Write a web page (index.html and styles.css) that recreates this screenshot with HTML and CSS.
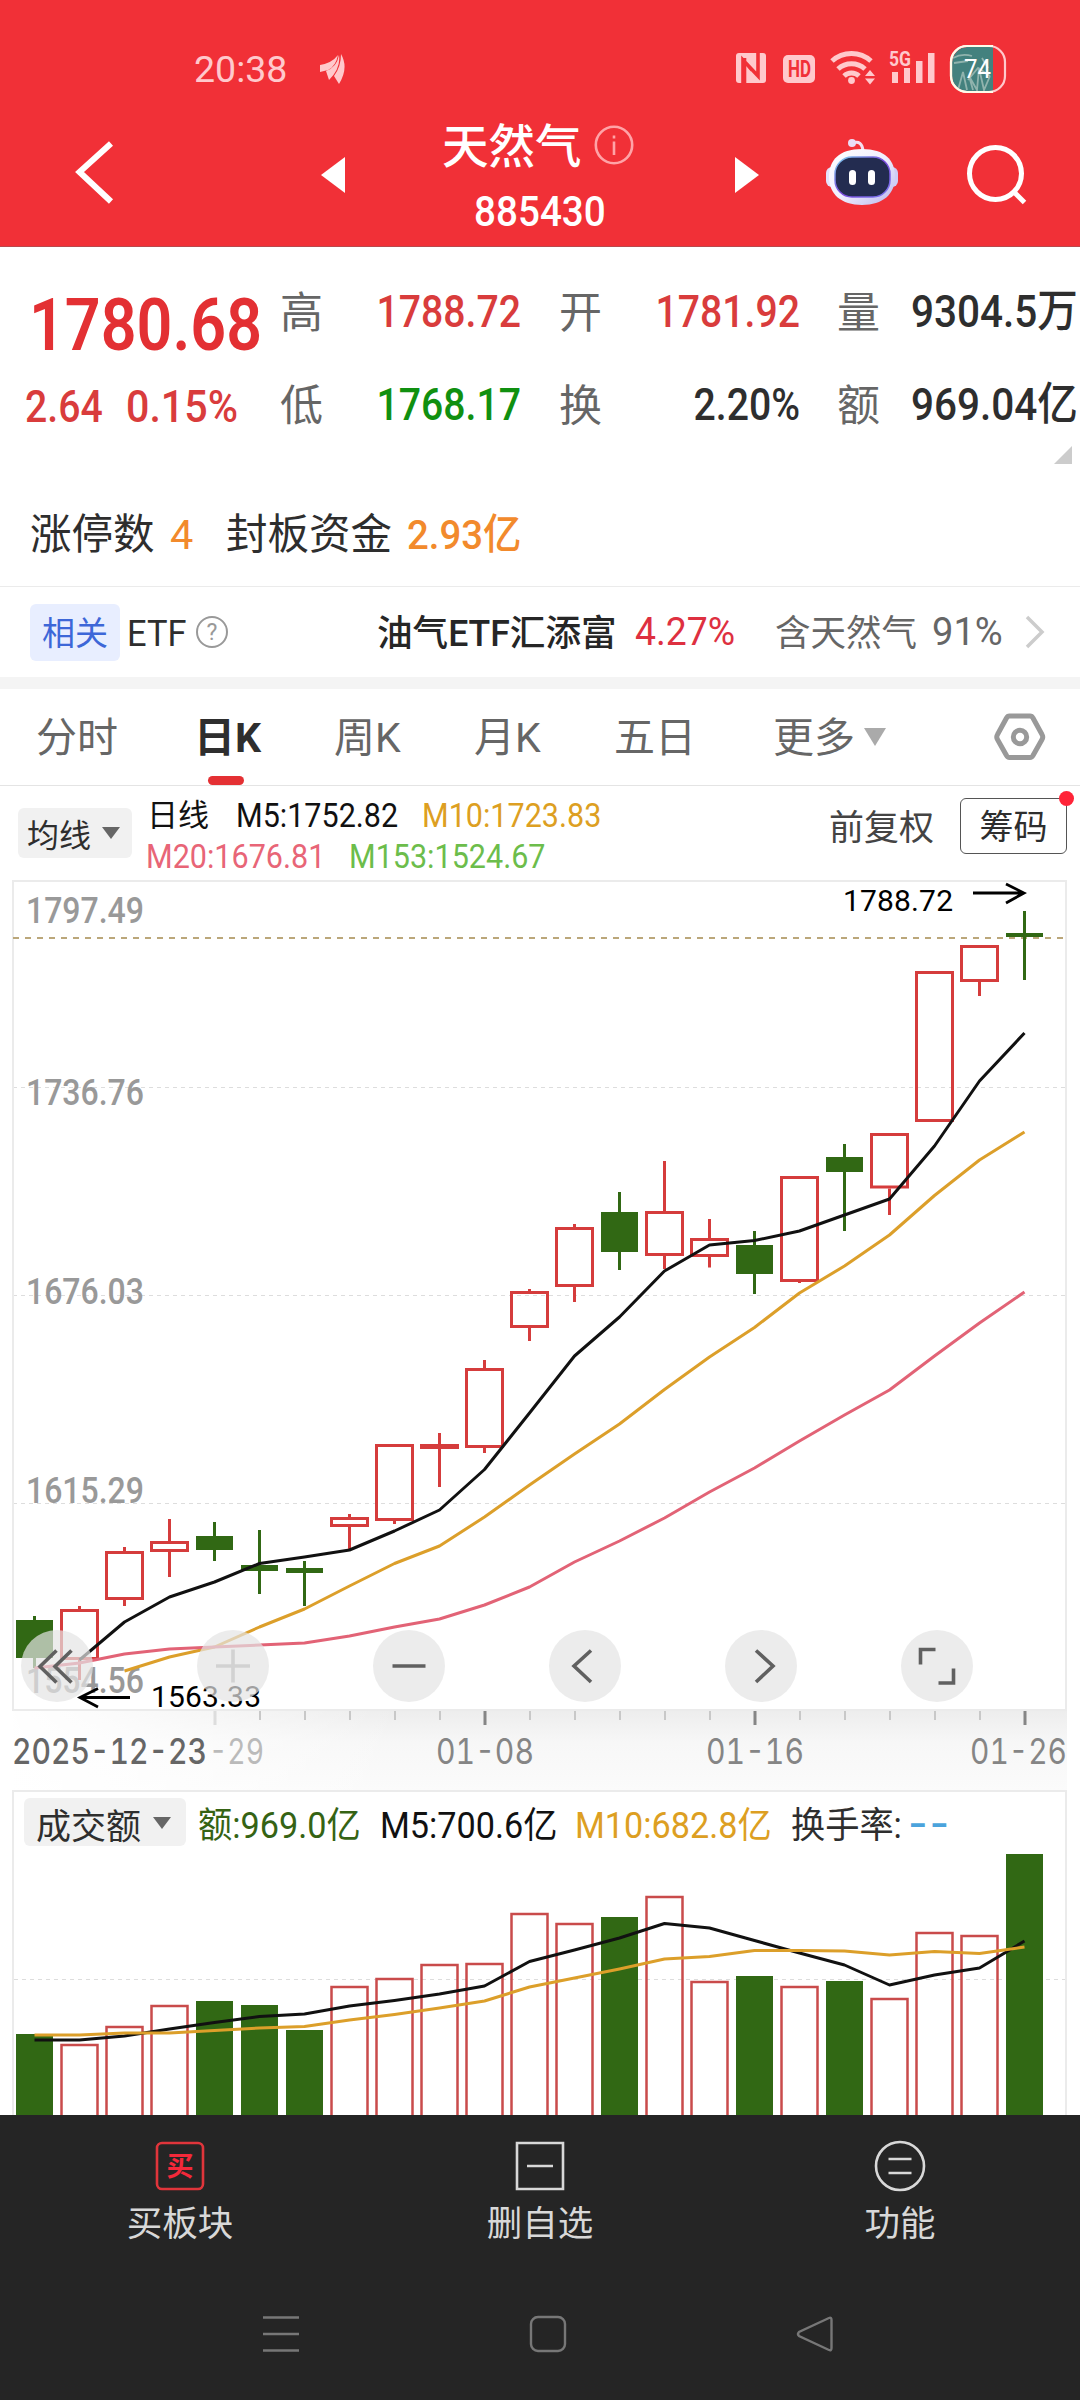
FILE: index.html
```html
<!DOCTYPE html>
<html lang="zh-CN">
<head>
<meta charset="utf-8">
<title>天然气 885430</title>
<link rel="stylesheet" href="styles.css">
</head>
<body>
<header class="top">
  <div class="status">
    <span class="clock">20:38</span>
    <svg class="app-mark" width="28" height="30" viewBox="320 54 28 30"><path d="M321 65Q333 63 339 55Q337 66 329 70L321 72ZM340 55Q342 68 330 80L327 71Q338 67 340 55ZM342 54Q350 68 340 84L335 76Q342 67 342 54Z"/></svg>
    <svg class="signals" width="280" height="50" viewBox="730 44 280 50">
      <rect x="736" y="53" width="30" height="30" rx="3"/>
      <path class="cut" d="M743 83V60l15 16V53M748.500 66L752 70M744.500 58V83" fill="none"/>
      <rect x="783" y="55" width="32" height="28" rx="5"/>
      <text class="hd" x="788" y="77" textLength="23" lengthAdjust="spacingAndGlyphs">HD</text>
      <path class="arc" d="M832 61a29 29 0 0 1 39 0M838 69a20 20 0 0 1 27 0M844 76a11 11 0 0 1 15 0"/>
      <circle cx="851.500" cy="80.500" r="3.400"/>
      <path d="M865 76l5-6 5 6zM865 78.500l5 6 5-6z"/>
      <text class="g5" x="889" y="66" textLength="22" lengthAdjust="spacingAndGlyphs">5G</text>
      <path d="M892 72h6v11h-6zM904 68h6v15h-6zM916 61h6.500v22h-6.500zM928 53h6.500v30h-6.500z"/>
      <path class="batt-fill" d="M993 47H967a16 16 0 0 0-15 15v15a16 16 0 0 0 15 15h26z"/>
      <path class="batt-art" d="M953 58q9-5 19-2M954 63l14-2M958 90l5-18 4 18M973 90l-4-14 8 14 2-22 5 22 6-14M968 80l10-12 12 8M982 58l6 10"/>
      <rect class="batt-rim" x="951" y="46" width="54" height="46" rx="16"/>
      <path class="batt-rim bright" d="M993 46H967a16 16 0 0 0-16 16v14a16 16 0 0 0 16 16h26"/>
      <text class="pct" x="964" y="78" textLength="27" lengthAdjust="spacingAndGlyphs">74</text>
    </svg>
  </div>
  <div class="nav">
    <svg class="back" width="44" height="70" viewBox="72 137 44 70"><path d="M111 143.500L79.500 172 111 201.500"/></svg>
    <svg class="prev" width="24" height="36" viewBox="0 0 24 36"><path d="M24 0v36L0 18z"/></svg>
    <div class="title">
      <div class="name">天然气<svg width="42" height="42" viewBox="0 0 42 42"><circle cx="21" cy="21" r="18.200"/><path d="M21 17.500V31M21 11.500v3"/></svg></div>
      <div class="code">885430</div>
    </div>
    <svg class="next" width="24" height="36" viewBox="0 0 24 36"><path d="M0 0v36L24 18z"/></svg>
    <svg class="robot" width="76" height="70" viewBox="823 137 76 70">
      <defs><linearGradient id="shell" x1="0" y1="0" x2="1" y2="1"><stop offset="0" stop-color="#fff"/><stop offset=".5" stop-color="#f1effd"/><stop offset="1" stop-color="#b9b6ee"/></linearGradient>
      <linearGradient id="visor" x1="0" y1="0" x2="1" y2="1"><stop offset="0" stop-color="#7fd3ee"/><stop offset=".5" stop-color="#7a48dc"/><stop offset="1" stop-color="#7b7af0"/></linearGradient></defs>
      <path d="M852 143q9-3 10 8" fill="none" stroke="#f5dff0" stroke-width="3"/><circle cx="851" cy="143" r="4" fill="#eadcf5"/>
      <rect x="825" y="167" width="12" height="20" rx="6" fill="#e4e2fb"/><rect x="885" y="167" width="12" height="20" rx="6" fill="#cfcdf6"/>
      <path d="M861 149c23 0 33 11 33 28s-12 28-33 28-33-11-33-28 10-28 33-28z" fill="url(#shell)"/>
      <rect x="834" y="157" width="55" height="40" rx="17" fill="#232c50" stroke="url(#visor)" stroke-width="1.500"/>
      <rect x="848" y="170" width="7" height="15" rx="3.500" fill="#fff"/><rect x="867" y="170" width="7" height="15" rx="3.500" fill="#fff"/>
    </svg>
    <svg class="search" width="64" height="64" viewBox="964 144 64 64"><circle cx="994.500" cy="173.500" r="26"/><path d="M1013.500 192.500l10 10"/></svg>
  </div>
</header>

<section class="quote">
  <div class="price">1780.68</div>
  <div class="change"><span>2.64</span><span class="pctchg">0.15%</span></div>
  <dl class="stats">
    <dt>高</dt><dd class="up">1788.72</dd><dt>开</dt><dd class="up">1781.92</dd><dt>量</dt><dd>9304.5万</dd>
    <dt>低</dt><dd class="down">1768.17</dd><dt>换</dt><dd>2.20%</dd><dt>额</dt><dd>969.04亿</dd>
  </dl>
  <svg class="corner" width="18" height="18"><path d="M18 0v18H0z"/></svg>
  <div class="limits"><span>涨停数</span><b>4</b><span>封板资金</span><b class="amt">2.93亿</b></div>
</section>

<section class="etf">
  <span class="tag">相关</span><span class="latin">ETF</span>
  <svg width="34" height="34" viewBox="0 0 34 34"><circle cx="17" cy="17" r="15"/><text x="17" y="25" text-anchor="middle">?</text></svg>
  <span class="fund">油气ETF汇添富</span><span class="gain">4.27%</span><span class="hold">含天然气</span><span class="share">91%</span>
  <svg class="more" width="20" height="34" viewBox="0 0 20 34"><path d="M2 2l15 15L2 32"/></svg>
</section>

<nav class="tabs">
  <span>分时</span><span class="on">日K</span><span>周K</span><span>月K</span><span>五日</span><span>更多</span>
  <svg class="tri" width="22" height="18"><path d="M0 0h22L11 18z"/></svg>
  <svg class="gear" width="52" height="50" viewBox="994 712 52 50"><path d="M1009.500 716h20.500q2 0 3 2l9 16.500q1.500 2.500 0 5l-9 16q-1 2-3 2h-20.500q-2 0-3-2l-9-16q-1.500-2.500 0-5l9-16.500q1-2 3-2z"/><circle cx="1020" cy="737" r="6.700"/></svg>
</nav>

<section class="legend">
  <span class="drop">均线<svg width="18" height="12"><path d="M0 0h18L9 12z"/></svg></span>
  <div class="ma">
    <div class="line1"><span class="cjk">日线</span><span>M5:1752.82</span><span class="m10">M10:1723.83</span></div>
    <div class="line2"><span class="m20">M20:1676.81</span><span class="m153">M153:1524.67</span></div>
  </div>
  <span class="adj">前复权</span>
  <span class="chips">筹码<i></i></span>
</section>

<svg class="kchart" width="1080" height="910" viewBox="0 880 1080 910">
  <defs>
    <linearGradient id="shade" x1="0" y1="0" x2="0" y2="1"><stop offset="0" stop-color="#ededed"/><stop offset=".4" stop-color="#f7f7f7"/><stop offset="1" stop-color="#fbfbfb"/></linearGradient>
    <linearGradient id="veil" x1="0" y1="0" x2="1" y2="0"><stop offset="0" stop-color="#fff"/><stop offset=".25" stop-color="#fff" stop-opacity=".8"/><stop offset="1" stop-color="#fff" stop-opacity="0"/></linearGradient>
  </defs>
  <rect x="13" y="1711" width="1054" height="79" fill="url(#shade)"/>
  <rect x="0" y="1711" width="400" height="79" fill="url(#veil)"/>
  <path class="grid" d="M13 1087.500H1066M13 1295.500H1066M13 1503.500H1066"/>
  <rect class="frame" x="13" y="881" width="1053" height="829"/>
  <g class="scale">
    <text x="26" y="923" textLength="118" lengthAdjust="spacingAndGlyphs">1797.49</text>
    <text x="26" y="1105" textLength="118" lengthAdjust="spacingAndGlyphs">1736.76</text>
    <text x="26" y="1304" textLength="118" lengthAdjust="spacingAndGlyphs">1676.03</text>
    <text x="26" y="1503" textLength="118" lengthAdjust="spacingAndGlyphs">1615.29</text>
    <text x="26" y="1693" textLength="118" lengthAdjust="spacingAndGlyphs">1554.56</text>
  </g>
  <path class="last" d="M13 938H1066"/>
  <g id="candles"></g>
  <g class="extreme">
    <text x="843" y="911" textLength="110">1788.72</text><text x="151" y="1707" textLength="110">1563.33</text>
    <path d="M973 893h51M1006 884l18 9-18 10M130 1697.500H80M98 1688.500l-18 9 18 9.500"/>
  </g>
  <g class="dates">
    <text class="first" x="12" y="1764" textLength="195" lengthAdjust="spacingAndGlyphs">2025-12-23</text>
    <text class="ghost" x="209" y="1764" textLength="55" lengthAdjust="spacingAndGlyphs">-29</text>
    <text x="436" y="1764" textLength="98" lengthAdjust="spacingAndGlyphs">01-08</text>
    <text x="706" y="1764" textLength="98" lengthAdjust="spacingAndGlyphs">01-16</text>
    <text x="970" y="1764" textLength="97" lengthAdjust="spacingAndGlyphs">01-26</text>
  </g>
  <g class="tools">
    <circle cx="57" cy="1666" r="36"/><circle cx="233" cy="1666" r="36"/><circle cx="409" cy="1666" r="36"/><circle cx="585" cy="1666" r="36"/><circle cx="761" cy="1666" r="36"/><circle cx="937" cy="1666" r="36"/>
    <path d="M56.500 1650.500L40 1666.500l16.500 16M71.500 1650.500L55 1666.500l16.500 16M392.500 1666h33M591 1650.500l-17 15.500 17 16M756 1650.500l17 15.500-17 16M920.500 1664.500v-15h15M953.500 1668.500v14.500h-15"/>
    <path class="off" d="M216 1666h34M233 1649.500v33"/>
  </g>
</svg>

<section class="volume">
  <div class="vlegend">
    <span class="drop">成交额<svg width="18" height="12"><path d="M0 0h18L9 12z"/></svg></span>
    <span class="amount">额:969.0亿</span><span>M5:700.6亿</span><span class="m10">M10:682.8亿</span><span class="rate">换手率:</span><span class="dash">--</span>
  </div>
  <svg class="vchart" width="1051" height="265" viewBox="14 1850 1051 265"><path class="grid" d="M14 1979.500H1065"/><g id="bars"></g></svg>
</section>

<footer class="bottom">
  <div class="actions">
    <div><svg width="52" height="52" viewBox="0 0 52 52"><rect class="buy" x="3" y="3" width="46" height="46" rx="5"/><text class="buy-t" x="26" y="36" text-anchor="middle">买</text></svg><span>买板块</span></div>
    <div><svg width="52" height="52" viewBox="0 0 52 52"><path d="M3 3h46v46H3zM13 26h26"/></svg><span>删自选</span></div>
    <div><svg width="52" height="52" viewBox="0 0 52 52"><circle cx="26" cy="26" r="24"/><path d="M14.500 19h23M14.500 33h23"/></svg><span>功能</span></div>
  </div>
  <div class="system">
    <svg width="40" height="40" viewBox="261 2314 40 40"><path d="M263 2317.500h36M263 2334h36M263 2350.500h36"/></svg>
    <svg width="40" height="40" viewBox="0 0 40 40"><rect x="3" y="3" width="34" height="34" rx="7"/></svg>
    <svg width="40" height="40" viewBox="795 2314 40 40"><path d="M829 2318L799 2332q-2 2 0 4l30 14q2.500 1 2.500-2v-28q0-3-2.500-2z"/></svg>
  </div>
</footer>
<script src="chart.js"></script>
</body>
</html>
```
FILE: styles.css
```css
* { box-sizing: border-box; }
body {
  margin: 0; width: 1080px; height: 2400px; overflow: hidden; background: #fff; color: #2e2e2e;
  font-family: Roboto, "Noto Sans CJK SC", sans-serif; white-space: nowrap;
}
svg { display: block; flex: none; }

.top { height: 247px; background: #f13037; border-bottom: 1px solid #b9484c; }
.status { height: 94px; padding-top: 44px; display: flex; align-items: center; }
.clock { width: 125px; margin-left: 194px; font-size: 37.500px; line-height: 48px; color: #ffc9cc; }
.app-mark { fill: #ffc9cc; }
.signals { margin-left: 383px; fill: #ffc9cc; }
.signals .cut { stroke: #f13037; stroke-width: 3.600; }
.signals .hd { fill: #f13037; font-size: 23px; font-weight: 700; }
.signals .g5 { font-size: 21px; font-weight: 700; }
.signals .arc { fill: none; stroke: #ffc9cc; stroke-width: 5; }
.batt-fill { fill: #43817e; }
.batt-art { fill: none; stroke: #a9c4be; stroke-width: 1.800; opacity: .75; }
.batt-rim { fill: none; stroke: #ffc9cc; stroke-width: 2.200; }
.batt-rim.bright { stroke: #fffbe9; }
.pct { fill: #fff; font-size: 25px; }

.nav { display: flex; height: 152px; align-items: flex-start; }
.nav svg { fill: none; stroke: #fff; }
.nav .back { margin: 43px 0 0 72px; stroke-width: 6; }
.nav .prev { margin: 63px 0 0 205px; fill: #fff; stroke: none; }
.title { width: 293px; margin-left: 45px; padding: 26px 0 0 52px; color: #fff; font-weight: 500; }
.name { display: flex; align-items: center; font-size: 46.500px; line-height: 54px; }
.name svg { margin: -5px 0 0 11px; stroke: #ffa3a7; stroke-width: 2.600; }
.code { font-size: 42px; line-height: 50px; padding-left: 32px; margin-top: 13px; transform: scaleX(.92); transform-origin: 32px 0; }
.nav .next { margin: 63px 0 0 52px; fill: #fff; stroke: none; }
.nav .robot { margin: 43px 0 0 65px; stroke: none; }
.nav .search { margin: 50px 0 0 65px; stroke-width: 5; }

.quote {
  height: 340px; border-bottom: 1px solid #ebebeb; display: grid;
  grid-template: 118px 93px 129px / 281px 799px; position: relative;
}
.price { padding: 38px 0 0 29px; font-size: 73px; line-height: 80px; font-weight: 600; color: #e33033; transform: scaleX(.86); transform-origin: 29px 0; }
.change { grid-row: 2; display: grid; grid-template-columns: 101px 130px; padding: 13px 0 0 25px; font-size: 45px; line-height: 58px; font-weight: 500; color: #d93c3c; }
.change span, .stats dd, .ma span { transform: scaleX(.87); transform-origin: 0 0; }
.change .pctchg { transform: scaleX(.915); }
.stats { grid-row: 1 / 3; grid-column: 2; margin: 0; display: grid; grid-template-columns: 46px 194px 85px 194px 71px 209px; grid-template-rows: 93px 93px; padding-top: 36px; line-height: 58px; }
.stats dt { font-size: 43px; color: #666; padding-top: 1px; margin-left: -1px; }
.stats dt:nth-of-type(3n+2) { margin-left: 38px; }
.stats dt:nth-of-type(3n) { margin-left: 37px; }
.stats dd { margin: 0; font-size: 45px; font-weight: 500; text-align: right; transform-origin: 100% 0; }
.stats dd:nth-of-type(3n) { text-align: left; transform: scaleX(.9); transform-origin: 0 0; margin-left: 40px; }
.stats .up { color: #d93c3c; }
.stats .down { color: #109010; }
.corner { position: absolute; left: 1054px; top: 199px; fill: #ccc; }
.limits { grid-row: 3; grid-column: 1 / 3; display: grid; grid-template-columns: 140px 56px 181px 200px; padding: 48px 0 0 30px; font-size: 41.500px; line-height: 58px; }
.limits b { font-weight: 400; color: #f28a2c; }
.limits .amt { font-weight: 500; transform: scaleX(.925); transform-origin: 0 0; }

.etf { height: 102px; border-bottom: 12px solid #f4f4f4; display: grid; grid-template-columns: 97px 68px 182px 258px 140px 157px 93px 30px; align-items: center; padding-left: 30px; font-size: 36px; line-height: 50px; }
.tag { width: 90px; height: 57px; line-height: 59px; border-radius: 6px; background: #e8eeff; color: #3d67d8; font-size: 33px; text-align: center; }
.latin { transform: scaleX(.93); transform-origin: 0 0; font-size: 37px; padding-top: 3px; }
.etf circle { fill: none; stroke: #999; stroke-width: 2; }
.etf text { font-size: 23px; fill: #999; }
.fund { font-weight: 500; padding-top: 4px; color: #262626; transform: scaleX(.988); transform-origin: 0 0; }
.gain { color: #de3040; font-size: 38.500px; transform: scaleX(.97); transform-origin: 0 0; }
.hold { color: #666; padding-top: 4px; transform: scaleX(.985); transform-origin: 0 0; }
.share { color: #666; font-size: 38.500px; transform: scaleX(.99); transform-origin: 0 0; }
.more { fill: none; stroke: #ccc; stroke-width: 3.500; }

.tabs { height: 97px; border-bottom: 1px solid #e4e4e4; display: grid; grid-template-columns: 161px 137px 140px 140px 159px 91px 130px 60px; padding: 0 0 0 36px; align-items: center; font-size: 41px; line-height: 99px; color: #666; }
.tabs span { height: 96px; }
.tabs .on { color: #2e2e2e; font-weight: 700; position: relative; left: -3px; }
.tabs .on::after { content: ""; position: absolute; left: 14px; bottom: 0; width: 36px; height: 9px; border-radius: 5px; background: #e43033; }
.tri { fill: #aaa; }
.gear { fill: none; stroke: #999; stroke-width: 5; }

.legend { height: 94px; display: grid; grid-template-columns: 129px 682px 131px 110px; padding-left: 18px; }
.drop { display: flex; align-items: center; justify-content: space-between; border-radius: 6px; background: #f1f1f1; }
.drop svg { fill: #666; }
.legend .drop { width: 114px; height: 50px; margin-top: 22px; padding: 0 12px 0 9px; font-size: 32px; }
.ma { padding-top: 9px; font-size: 33px; line-height: 41px; }
.ma > div { display: grid; }
.ma span { transform: scaleX(.925); }
.ma .cjk { font-size: 31px; padding-left: 0; transform: none; }
.line1 { grid-template-columns: 89px 186px 200px; color: #111; }
.line2 { grid-template-columns: 203px 220px; margin-left: -1px; }
.m10 { color: #dd9f22; }
.m20 { color: #e86577; }
.m153 { color: #6cbd4b; }
.adj { font-size: 35px; line-height: 50px; padding-top: 18px; color: #444; }
.chips { position: relative; width: 107px; height: 56px; margin-top: 12px; border: 1.500px solid #555; border-radius: 6px; text-align: center; font-size: 34px; line-height: 56px; }
.chips i { position: absolute; right: -8px; top: -8px; width: 15px; height: 15px; border-radius: 50%; background: #ff2438; }

.grid { fill: none; stroke: #ddd; stroke-width: 1; stroke-dasharray: 4 4; }
.frame { fill: none; stroke: #ebebeb; stroke-width: 2; }
.last { fill: none; stroke: #bba77a; stroke-width: 1.800; stroke-dasharray: 6 6; }
.scale text { font-size: 36.500px; fill: #999; font-weight: 500; }
.extreme text { font-size: 30px; fill: #000; }
.extreme path { fill: none; stroke: #000; stroke-width: 2.800; }
.dates text { font-family: Inter, sans-serif; font-feature-settings: "tnum"; font-size: 35px; fill: #858585; }
.dates .first { fill: #666; font-weight: 500; }
.dates .ghost { fill: #bababa; }
.tools circle { fill: rgba(228, 228, 228, .7); }
.tools path { fill: none; stroke: #606060; stroke-width: 3.600; }
.tools .off { stroke: #d2d2d2; }
.tick { stroke: #c8c8c8; stroke-width: 2; }
.tick.major { stroke: #858585; stroke-width: 3; }
.tick.faint { stroke: #ddd; stroke-width: 3; }
.red { fill: none; stroke: #d53c3c; stroke-width: 3; }
.vchart .red { stroke: #c94b4b; stroke-width: 2.500; }
.green { fill: #316814; stroke: none; }
.wick-green { stroke: #316814; stroke-width: 3; }
.avg { fill: none; stroke-width: 3; stroke-linejoin: round; }
.a5 { stroke: #111; }
.a10 { stroke: #dc9f2a; }
.a20 { stroke: #e26376; }

.volume { height: 325px; margin: 0 13px 0 12px; border: 2px solid #ebebeb; border-bottom: 0; overflow: hidden; }
.vlegend { height: 58px; display: grid; grid-template-columns: 174px 182px 195px 216px 118px 60px; padding: 2px 0 0 10px; align-items: center; font-size: 36px; color: #111; }
.vlegend > span:not(.drop) { transform: scaleX(.95); transform-origin: 0 0; }
.vlegend .drop { width: 162px; height: 48px; padding: 2px 15px 0 12px; font-size: 35px; color: #2e2e2e; }
.vlegend .amount { color: #356314; }
.vlegend .m10 { color: #dd9f22; }
.vlegend > .rate { color: #2e2e2e; transform: none; }
.vlegend .dash { font-family: Inter, sans-serif; font-size: 45px; letter-spacing: 2px; color: #4ba3dc; margin-left: -1px; }

.bottom { height: 285px; background: #252525; }
.actions { display: grid; grid-template-columns: repeat(3, 1fr); padding-top: 25px; color: #d8d8d8; font-size: 35.500px; line-height: 50px; }
.actions div { display: flex; flex-direction: column; align-items: center; gap: 7px; }
.actions svg { fill: none; stroke: #d8d8d8; stroke-width: 2.600; }
.actions .buy { stroke: #e0353b; }
.actions .buy-t { fill: #f4293a; stroke: none; font-size: 27px; font-weight: 700; }
.system { display: flex; padding: 65px 0 0 261px; gap: 227px; }
.system svg { fill: none; stroke: #777; stroke-width: 2.400; }
```
FILE: chart.js
```js
// One entry per trading day: [rising, body top, body bottom, high, low]
const candles = [
  [0,1620,1658,1616,1668],[1,1609,1660,1606,1680],[1,1551,1600,1547,1606],[1,1541,1552,1519,1577],
  [0,1536,1550,1522,1561],[0,1565,1571,1530,1594],[0,1568,1573,1561,1606],[1,1517,1527,1514,1549],
  [1,1444,1521,1444,1524],[1,1444,1449,1433,1487],[1,1368,1448,1360,1453],[1,1291,1328,1289,1341],
  [1,1227,1287,1224,1302],[0,1212,1252,1192,1270],[1,1211,1256,1161,1269],[1,1238,1257,1219,1267.5],
  [0,1245,1274,1231,1294],[1,1176,1282,1176,1283],[0,1157,1172,1144,1231],[1,1133,1188.5,1133,1215],
  [1,971,1122,971,1122],[1,945,982,945,996],[0,933,937,911,980]
];
const volumes = [2034,2044,2026,2005,2001,2005,2030,1986,1978,1964,1963,1913,1923,1917,1896,1981,1976,1986,1981,1998,1932,1935,1854];
const price = {
  a5: [1,1660,1622,1597,1582,1563.5,1557,1550,1531,1510,1469.5,1413,1356,1317,1271,1245,1240.5,1231,1215,1199,1146,1081,1033],
  a10: [2,1671,1657,1647,1627,1609,1586,1563.5,1546,1517,1485,1454,1424,1389.5,1357,1327.5,1293,1266,1235,1195.5,1160,1132],
  a20: [0,1668,1663,1654,1649,1647,1645,1643,1636,1627,1619,1605,1587,1562,1541,1518,1492,1468,1441,1415,1390,1356,1323,1292]
};
const turnover = {
  a5: [0,2040,2040,2036,2029,2022.5,2016.5,2014,2006,2000.5,1994,1986,1961.5,1950,1938,1923.5,1928,1940.5,1953,1965,1985,1975,1968,1941],
  a10: [0,2035,2035,2033,2033,2030.5,2028,2026.5,2020,2014.5,2008,2001,1987,1978,1969,1959,1956.5,1950.5,1950.5,1951,1955,1951.5,1953.5,1947]
};
const x = i => 34.5 + 45 * i;
const path = (cls, d) => `<path class="${cls}" d="${d}"/>`;
const averages = set => Object.entries(set).map(([cls, [start, ...ys]]) =>
  path('avg ' + cls, 'M' + ys.map((y, k) => x(start + k) + ' ' + y).join('L'))).join('');

let out = '';
candles.forEach(([up, top, bottom, high, low], i) => {
  const wick = `M${x(i)} ${high}V${top}M${x(i)} ${bottom}V${low}`;
  out += up
    ? path('red', `M${x(i) - 18} ${top + 1.5}h36V${bottom - 1.5}h-36z`) + path('red', wick)
    : path('green', `M${x(i) - 18.5} ${top}h37V${bottom}h-37z`) + path('wick-green', wick);
  if (i > 3) {
    const major = (i - 4) % 6 === 0;
    out += path('tick' + (i === 4 ? ' faint' : major ? ' major' : ''), `M${x(i) + .5} 1711v${major ? 14 : 9}`);
  }
});
document.getElementById('candles').innerHTML = out + averages(price);

document.getElementById('bars').innerHTML = volumes.map((y, i) => candles[i][0]
  ? path('red', `M${x(i) - 18} 2120V${y + 1}h36V2120`)
  : path('green', `M${x(i) - 18.5} ${y}h37V2120h-37z`)).join('') + averages(turnover);
```
